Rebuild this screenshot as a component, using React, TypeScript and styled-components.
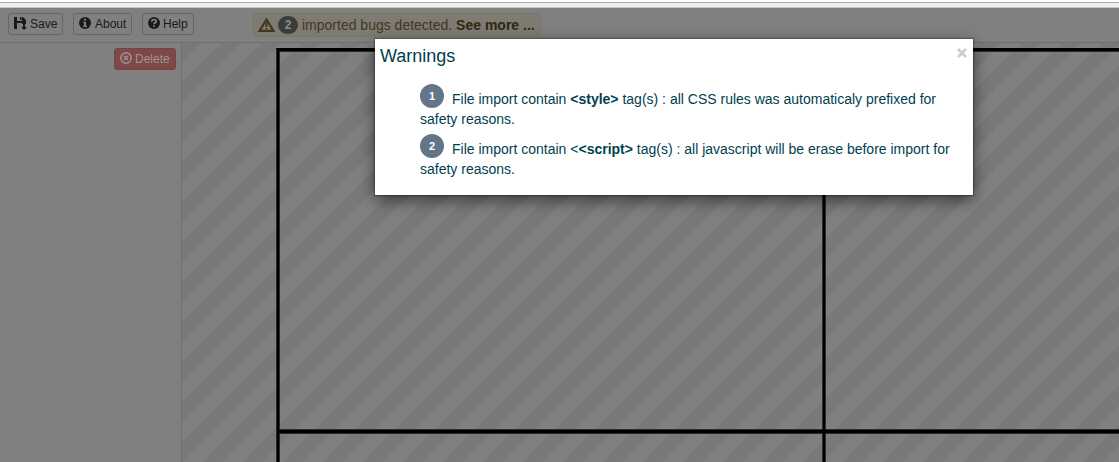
import React from "react";
import styled, { createGlobalStyle } from "styled-components";

const Global = createGlobalStyle`
  *, *::before, *::after { box-sizing: border-box; }
  body { margin: 0; background: #fff; overflow: hidden; }
  body, button { font-family: "Liberation Sans", Arial, sans-serif; }
`;

const Page = styled.div`
  height: 462px;
  display: flex;
  flex-direction: column;
`;
const BrowserEdge = styled.div`
  height: 8px;
  flex: none;
  background: linear-gradient(#fff 2px, #adadad 2px, #adadad 3px, #f0f0f0 3px, #f0f0f0 7px, #c8c4c1 7px);
`;
const Editor = styled.div`
  flex: 1;
  min-height: 0;
  position: relative;
  display: flex;
  flex-direction: column;
  background: #808080;
`;
const Toolbar = styled.header`
  height: 35px;
  flex: none;
  display: flex;
  align-items: flex-start;
  padding: 5px 8px 0;
  border-bottom: 1px solid #6f6f6f;
`;
const ToolButton = styled.button<{ $width: number; $gap?: number; $danger?: boolean }>`
  display: flex;
  align-items: center;
  width: ${(p) => p.$width}px;
  height: 22px;
  margin: 0 10px 0 0;
  padding: 0 0 0 5px;
  gap: ${(p) => p.$gap ?? 3}px;
  font-size: 12px;
  line-height: 18px;
  white-space: nowrap;
  border-radius: 3px;
  border: 1px solid ${(p) => (p.$danger ? "#784242" : "#666")};
  background: ${(p) => (p.$danger ? "#7c4848" : "#808080")};
  color: ${(p) => (p.$danger ? "#a79191" : "#1a1a1a")};
  svg { flex: none; margin-top: -2px; }
`;
const Alert = styled.div`
  display: flex;
  align-items: center;
  width: 288px;
  height: 24px;
  margin-left: 49px;
  padding-left: 4px;
  border: 1px solid #7d7566;
  border-radius: 4px;
  background: #7e7c72;
  color: #45361e;
  font-size: 14px;
  white-space: pre;
  b { color: #33270f; }
`;
const Count = styled.span`
  display: flex;
  align-items: center;
  justify-content: center;
  width: 20px;
  height: 18px;
  margin: 0 4px 0 3px;
  border-radius: 10px;
  background: #3c3c3c;
  color: #8c8c8c;
  font-size: 12px;
  font-weight: bold;
`;
const Workspace = styled.div`
  flex: 1;
  min-height: 0;
  display: flex;
`;
const Sidebar = styled.aside`
  width: 182px;
  flex: none;
  display: flex;
  justify-content: flex-end;
  padding: 5px 5px 0 0;
  border-right: 1px solid #6f6f6f;
  ${ToolButton} { margin: 0; }
`;
const Canvas = styled.main`
  flex: 1;
  min-width: 0;
  padding: 5px 0 0 94px;
  overflow: hidden;
  background-color: #808080;
  background-image: linear-gradient(135deg, #797979 25%, transparent 25%, transparent 50%, #797979 50%, #797979 75%, transparent 75%);
  background-size: 40px 40px;
`;
const Grid = styled.div`
  width: 1093px;
  height: 763px;
  padding: 1px 0 0 2px;
  border-top: 2px solid #000;
  border-left: 1px solid #2a2a2a;
  box-shadow: inset 1px 0 #000;
  display: grid;
  grid-template-columns: 544px 544px;
  grid-template-rows: 379px 379px;
  gap: 3px 2px;
`;
const Cell = styled.div`
  border: 1px solid #2a2a2a;
  box-shadow: 0 0 0 1px #000, 0 1px 0 1px #000;
`;
const Dialog = styled.section`
  position: absolute;
  left: 375px;
  top: 31px;
  width: 598px;
  height: 156px;
  padding: 0 5px;
  background: #fff;
  color: #003f4f;
  box-shadow: 0 5px 15px rgba(0, 0, 0, 0.55), 0 0 1px 1px rgba(0, 0, 0, 0.25);
`;
const DialogHead = styled.div`
  display: flex;
  justify-content: space-between;
  height: 45px;
`;
const Title = styled.h4`
  margin: 6px 0 0;
  font-size: 18px;
  font-weight: 400;
  line-height: 22px;
`;
const Close = styled.button`
  width: 14px;
  height: 14px;
  margin: 7px -1px 0 0;
  padding: 2px;
  border: 0;
  background: none;
  display: flex;
`;
const Warnings = styled.ul`
  margin: 0;
  padding: 0 0 0 40px;
  list-style: none;
  font-size: 14px;
`;
const Warning = styled.li`
  display: flex;
  height: 50px;
`;
const Message = styled.p`
  flex: 1;
  margin: 5px 0 0 -24px;
  line-height: 20px;
  text-indent: 32px;
`;
const Badge = styled.span`
  display: flex;
  flex: none;
  align-items: center;
  justify-content: center;
  width: 24px;
  height: 24px;
  border-radius: 50%;
  background: #637687;
  color: #fff;
  font-size: 11px;
  font-weight: bold;
  line-height: 12px;
`;

const SaveIcon = () => (
  <svg width="13" height="13" viewBox="0 0 13 13" fill="currentColor">
    <path d="M0 0h3v4h5V0h1l3 3v4H8V6H3v6H0zM6 0h1.500v3H6zM9 7h2v3h2l-3 3-3-3h2z" />
  </svg>
);
const InfoIcon = () => (
  <svg width="12" height="12" viewBox="0 0 12 12">
    <circle cx="6" cy="6" r="6" fill="currentColor" />
    <path d="M5 1.800h2v1.700H5zM4.200 4.700H7v4h1v1.200H4.200V8.700H5V6h-.8z" fill="#808080" />
  </svg>
);
const HelpIcon = () => (
  <svg width="12" height="12" viewBox="0 0 12 12">
    <circle cx="6" cy="6" r="6" fill="currentColor" />
    <path d="M3.700 4.500Q3.700 2.700 6 2.700T8.300 4.400Q8.300 5.400 7 5.900Q6 6.300 6 7.300" fill="none" stroke="#808080" strokeWidth="1.700" />
    <path d="M5.100 8.200h1.800v1.600H5.100z" fill="#808080" />
  </svg>
);
const RemoveIcon = () => (
  <svg width="12" height="12" viewBox="0 0 12 12" fill="none" stroke="currentColor" strokeWidth="1.500">
    <circle cx="6" cy="6" r="5.200" />
    <path d="M4 4l4 4M8 4L4 8" />
  </svg>
);
const AlertIcon = () => (
  <svg width="17" height="14" viewBox="0 0 17 14">
    <path d="M8.500 1.500L15.500 12.800H1.500z" fill="none" stroke="currentColor" strokeWidth="2.200" />
    <path d="M7.500 4.500h2v4.500h-2zM7.500 10h2v1.500h-2z" fill="currentColor" />
  </svg>
);

export default function App() {
  return (
    <Page>
      <Global />
      <BrowserEdge />
      <Editor>
        <Toolbar>
          <ToolButton $width={55}><SaveIcon />Save</ToolButton>
          <ToolButton $width={59} $gap={4}><InfoIcon />About</ToolButton>
          <ToolButton $width={52}><HelpIcon />Help</ToolButton>
          <Alert><AlertIcon /><Count>2</Count>imported bugs detected. <b>See more ...</b></Alert>
        </Toolbar>
        <Workspace>
          <Sidebar>
            <ToolButton $width={62} $danger><RemoveIcon />Delete</ToolButton>
          </Sidebar>
          <Canvas>
            <Grid><Cell /><Cell /><Cell /><Cell /></Grid>
          </Canvas>
        </Workspace>
        <Dialog>
          <DialogHead>
            <Title>Warnings</Title>
            <Close aria-label="Close">
              <svg width="10" height="10" viewBox="0 0 10 10" stroke="#ccc" strokeWidth="2.800"><path d="M1 1l8 8M9 1L1 9" /></svg>
            </Close>
          </DialogHead>
          <Warnings>
            <Warning>
              <Badge>1</Badge>
              <Message>File import contain <b>&lt;style&gt;</b> tag(s) : all CSS rules was automaticaly prefixed for safety reasons.</Message>
            </Warning>
            <Warning>
              <Badge>2</Badge>
              <Message>File import contain &lt;<b>&lt;script&gt;</b> tag(s) : all javascript will be erase before import for safety reasons.</Message>
            </Warning>
          </Warnings>
        </Dialog>
      </Editor>
    </Page>
  );
}
